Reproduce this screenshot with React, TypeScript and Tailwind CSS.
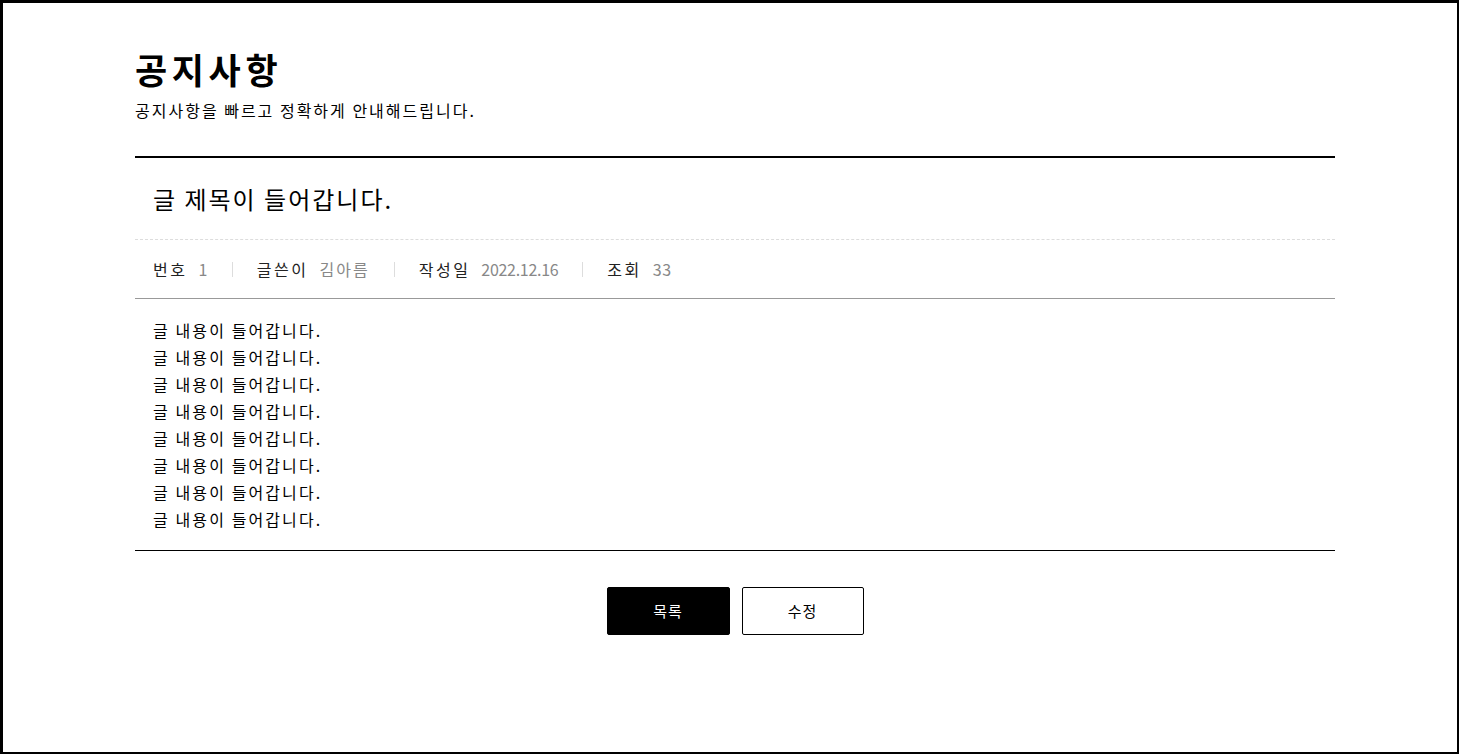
const font = "font-['Noto_Sans_CJK_KR','Noto_Sans',sans-serif]";

const meta = [
  { label: "번호", value: "1", valueClass: "tracking-[0.5px]" },
  { label: "글쓴이", value: "김아름", valueClass: "tracking-[2px]" },
  { label: "작성일", value: "2022.12.16", valueClass: "tracking-[-0.3px]" },
  { label: "조회", value: "33", valueClass: "tracking-[0.5px]" },
];

export default function App() {
  const lines = Array.from({ length: 8 }, () => "글 내용이 들어갑니다.");

  return (
    <div
      className={`${font} box-border h-[754px] w-full border-t-[3px] border-l-[3px] border-r-2 border-b-2 border-black bg-white text-black`}
    >
      <div className="ml-[132px] w-[1200px] pt-[42px]">
        <h1 className="text-[35px] font-bold leading-[48px] tracking-[4.6px]">공지사항</h1>
        <p className="mt-[6px] text-[16px] leading-[22px] tracking-[2px]">
          공지사항을 빠르고 정확하게 안내해드립니다.
        </p>

        <div className="mt-[35px] border-t-2 border-black">
          <div className="border-b border-dashed border-[#dddddd] px-[18px] py-[23px]">
            <h2 className="text-[24px] leading-[35px] tracking-[2px]">글 제목이 들어갑니다.</h2>
          </div>

          <div className="flex items-center border-b border-[#999999] px-[18px] py-[17px] text-[16px] leading-[24px]">
            {meta.map((m, i) => (
              <div key={m.label} className="flex items-center">
                {i > 0 && <span className="mx-[24px] h-[15px] w-px bg-[#dddddd]" />}
                <span className="tracking-[2.5px] text-[#222222]">{m.label}</span>
                <span className={`ml-[11px] text-[#888888] ${m.valueClass}`}>{m.value}</span>
              </div>
            ))}
          </div>

          <div className="border-b border-black px-[18px] pt-[18px] pb-[17px] text-[16px] leading-[27px] tracking-[2.1px]">
            {lines.map((l, i) => (
              <p key={i}>{l}</p>
            ))}
          </div>
        </div>

        <div className="mt-[36px] flex justify-center gap-[12px]">
          <button
            type="button"
            className="h-[48px] w-[123px] rounded-[2px] border border-black bg-black text-[15px] tracking-[1px] text-white"
          >
            목록
          </button>
          <button
            type="button"
            className="h-[48px] w-[122px] rounded-[2px] border border-black bg-white text-[15px] tracking-[1px] text-black"
          >
            수정
          </button>
        </div>
      </div>
    </div>
  );
}
